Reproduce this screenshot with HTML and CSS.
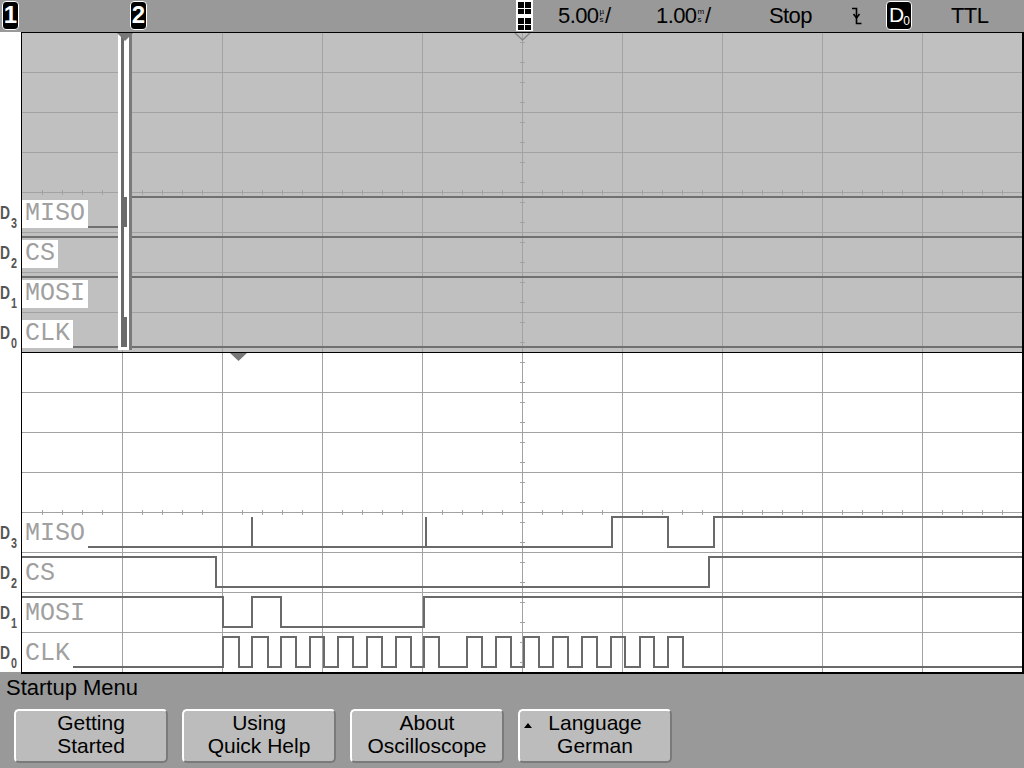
FILE: index.html
```html
<!DOCTYPE html>
<html>
<head>
<meta charset="utf-8">
<link rel="stylesheet" href="styles.css">
</head>
<body>
<div class="scope">
  <header class="status">
    <div class="badge badge-1">1</div>
    <div class="badge badge-2">2</div>
    <svg class="gridicon" width="17" height="31" viewBox="0 0 17 31">
      <rect x="0" y="0" width="17" height="31" fill="#fff"/>
      <rect x="2" y="2" width="6" height="6" fill="#000"/>
      <rect x="9" y="2" width="6" height="6" fill="#000"/>
      <rect x="2" y="9" width="6" height="5" fill="#000"/>
      <rect x="9" y="9" width="6" height="5" fill="#000"/>
      <rect x="2" y="18" width="6" height="6" fill="#000"/>
      <rect x="9" y="18" width="6" height="6" fill="#000"/>
      <rect x="2" y="25" width="6" height="5" fill="#000"/>
      <rect x="9" y="25" width="6" height="5" fill="#000"/>
    </svg>
    <div class="scale scale-time"><span>5.00</span><span class="unit"><i>µ</i><i>s</i></span><span>/</span></div>
    <div class="scale scale-main"><span>1.00</span><span class="unit"><i>m</i><i>s</i></span><span>/</span></div>
    <div class="runstate">Stop</div>
    <svg class="trig" width="11" height="20" viewBox="0 0 11 20">
      <path d="M1 2.5 H5.5 V17.5 H10.5" fill="none" stroke="#000" stroke-width="1.6"/>
      <path d="M2.5 8 L5.5 12 L8.5 8" fill="none" stroke="#000" stroke-width="1.6"/>
    </svg>
    <div class="badge badge-d0">D<sub>0</sub></div>
    <div class="trigmode">TTL</div>
  </header>

  <svg class="screen" width="1024" height="642" viewBox="0 32 1024 642" font-family="Liberation Mono, monospace">
    <!-- backgrounds -->
    <rect x="0" y="32" width="21" height="640" fill="#fff"/>
    <rect x="22" y="33" width="1000" height="319" fill="#c0c0c0"/>
    <rect x="22" y="353" width="1000" height="319" fill="#fff"/>

    <!-- grid -->
    <g stroke="#a2a2a2" stroke-width="1" shape-rendering="crispEdges">
      <path d="M122.5 33V672 M222.5 33V672 M322.5 33V672 M422.5 33V672 M522.5 33V672 M622.5 33V672 M722.5 33V672 M822.5 33V672 M922.5 33V672"/>
      <path d="M22 72.5H1022 M22 112.5H1022 M22 152.5H1022 M22 192.5H1022 M22 232.5H1022 M22 272.5H1022 M22 312.5H1022"/>
      <path d="M22 392.5H1022 M22 432.5H1022 M22 472.5H1022 M22 512.5H1022 M22 552.5H1022 M22 592.5H1022 M22 632.5H1022"/>
      <path id="hticks" d="M42.5 190V195 M62.5 190V195 M82.5 190V195 M102.5 190V195 M142.5 190V195 M162.5 190V195 M182.5 190V195 M202.5 190V195 M242.5 190V195 M262.5 190V195 M282.5 190V195 M302.5 190V195 M342.5 190V195 M362.5 190V195 M382.5 190V195 M402.5 190V195 M442.5 190V195 M462.5 190V195 M482.5 190V195 M502.5 190V195 M542.5 190V195 M562.5 190V195 M582.5 190V195 M602.5 190V195 M642.5 190V195 M662.5 190V195 M682.5 190V195 M702.5 190V195 M742.5 190V195 M762.5 190V195 M782.5 190V195 M802.5 190V195 M842.5 190V195 M862.5 190V195 M882.5 190V195 M902.5 190V195 M942.5 190V195 M962.5 190V195 M982.5 190V195 M1002.5 190V195"/>
      <use href="#hticks" y="320"/>
      <path d="M520 42.5H525 M520 62.5H525 M520 82.5H525 M520 102.5H525 M520 122.5H525 M520 142.5H525 M520 162.5H525 M520 182.5H525 M520 202.5H525 M520 222.5H525 M520 242.5H525 M520 262.5H525 M520 282.5H525 M520 302.5H525 M520 322.5H525 M520 342.5H525 M520 362.5H525 M520 382.5H525 M520 402.5H525 M520 422.5H525 M520 442.5H525 M520 462.5H525 M520 482.5H525 M520 502.5H525 M520 522.5H525 M520 542.5H525 M520 562.5H525 M520 582.5H525 M520 602.5H525 M520 622.5H525 M520 642.5H525 M520 662.5H525"/>
    </g>

    <!-- upper (main) waveforms -->
    <g fill="none" stroke="#707070" stroke-width="2" shape-rendering="crispEdges">
      <path d="M22 227H121"/>
      <path d="M131 197H1022"/>
      <path d="M22 237H1022"/>
      <path d="M22 277H1022"/>
      <path d="M22 347H1022"/>
    </g>

    <!-- lower (zoomed) waveforms -->
    <g fill="none" stroke="#6a6a6a" stroke-width="2" shape-rendering="crispEdges">
      <path d="M22 547H252V517V547H426V517V547H612V517H668V547H714V517H1022"/>
      <path d="M22 557H216V587H709V557H1022"/>
      <path d="M22 597H223V627H252V597H281V627H424V597H1022"/>
      <path d="M22 667H223V637H239V667H252V637H268V667H281V637H296V667H310V637H324V667H338V637H353V667H367V637H382V667H396V637H411V667H424V637H439V667H467V637H482V667H496V637H511V667H524V637H539V667H553V637H568V667H582V637H597V667H611V637H625V667H640V637H654V667H668V637H683V667H1022"/>
    </g>

    <!-- zoom window marker in main view -->
    <g shape-rendering="crispEdges">
      <rect x="118" y="33" width="3" height="317" fill="#fff"/>
      <rect x="121" y="33" width="3" height="314" fill="#6a6a6a"/>
      <rect x="124" y="33" width="5" height="314" fill="#fff"/>
      <rect x="129" y="33" width="3" height="317" fill="#7a7a7a"/>
      <rect x="118" y="347" width="11" height="3" fill="#fff"/>
      <rect x="124" y="197" width="3" height="30" fill="#6a6a6a"/>
      <rect x="124" y="317" width="3" height="30" fill="#6a6a6a"/>
    </g>

    <!-- channel label boxes & names -->
    <g fill="#fff">
      <rect x="22" y="200" width="66" height="28"/>
      <rect x="22" y="240" width="36" height="28"/>
      <rect x="22" y="280" width="66" height="28"/>
      <rect x="22" y="320" width="51" height="28"/>
      <rect x="22" y="520" width="66" height="28"/>
      <rect x="22" y="560" width="36" height="28"/>
      <rect x="22" y="600" width="66" height="28"/>
      <rect x="22" y="640" width="51" height="28"/>
    </g>
    <g fill="#a0a0a0" font-size="25">
      <text x="25" y="219.5">MISO</text>
      <text x="25" y="259.5">CS</text>
      <text x="25" y="299.5">MOSI</text>
      <text x="25" y="339.5">CLK</text>
      <text x="25" y="539.5">MISO</text>
      <text x="25" y="579.5">CS</text>
      <text x="25" y="619.5">MOSI</text>
      <text x="25" y="659.5">CLK</text>
    </g>

    <!-- D labels -->
    <g fill="#555" font-family="Liberation Sans, Arial, sans-serif" font-weight="bold">
      <g font-size="18">
        <text x="0" y="219" textLength="10" lengthAdjust="spacingAndGlyphs">D</text>
        <text x="0" y="259" textLength="10" lengthAdjust="spacingAndGlyphs">D</text>
        <text x="0" y="299" textLength="10" lengthAdjust="spacingAndGlyphs">D</text>
        <text x="0" y="339" textLength="10" lengthAdjust="spacingAndGlyphs">D</text>
        <text x="0" y="539" textLength="10" lengthAdjust="spacingAndGlyphs">D</text>
        <text x="0" y="579" textLength="10" lengthAdjust="spacingAndGlyphs">D</text>
        <text x="0" y="619" textLength="10" lengthAdjust="spacingAndGlyphs">D</text>
        <text x="0" y="659" textLength="10" lengthAdjust="spacingAndGlyphs">D</text>
      </g>
      <g font-size="14">
        <text x="11" y="228" textLength="6" lengthAdjust="spacingAndGlyphs">3</text>
        <text x="11" y="268" textLength="6" lengthAdjust="spacingAndGlyphs">2</text>
        <text x="11" y="308" textLength="6" lengthAdjust="spacingAndGlyphs">1</text>
        <text x="11" y="348" textLength="6" lengthAdjust="spacingAndGlyphs">0</text>
        <text x="11" y="548" textLength="6" lengthAdjust="spacingAndGlyphs">3</text>
        <text x="11" y="588" textLength="6" lengthAdjust="spacingAndGlyphs">2</text>
        <text x="11" y="628" textLength="6" lengthAdjust="spacingAndGlyphs">1</text>
        <text x="11" y="668" textLength="6" lengthAdjust="spacingAndGlyphs">0</text>
      </g>
    </g>

    <!-- markers -->
    <polygon points="117,33 133,33 125,41" fill="#777"/>
    <polyline points="515,33 522.5,40 530,33" fill="none" stroke="#888" stroke-width="1.5"/>
    <polygon points="230,353 247,353 238.5,361" fill="#777"/>

    <!-- frame lines -->
    <g fill="#000" shape-rendering="crispEdges">
      <rect x="21" y="32" width="1003" height="1"/>
      <rect x="21" y="32" width="1" height="642"/>
      <rect x="21" y="352" width="1003" height="1"/>
      <rect x="21" y="672" width="1003" height="2"/>
      <rect x="1022" y="32" width="2" height="642"/>
    </g>
  </svg>

  <footer class="menu">
    <div class="menu-title">Startup Menu</div>
    <div class="softkeys">
      <div class="softkey">Getting<br>Started</div>
      <div class="softkey">Using<br>Quick Help</div>
      <div class="softkey">About<br>Oscilloscope</div>
      <div class="softkey softkey-cycle">Language<br>German</div>
    </div>
  </footer>
</div>
</body>
</html>
```
FILE: styles.css
```css
html, body {
  margin: 0;
  padding: 0;
}
body {
  background: #999999;
  font-family: "Liberation Sans", Arial, sans-serif;
  color: #000;
}
.scope {
  width: 1024px;
  height: 768px;
  display: flex;
  flex-direction: column;
  overflow: hidden;
}

/* ---------- status bar ---------- */
.status {
  height: 32px;
  flex-shrink: 0;
  display: flex;
  align-items: flex-start;
  font-size: 22px;
  letter-spacing: -0.6px;
  line-height: 32px;
}
.status > * {
  flex-shrink: 0;
}
.badge {
  box-sizing: border-box;
  margin-top: 1px;
  height: 29px;
  width: 17px;
  background: #000;
  border: 1.5px solid #fff;
  border-radius: 4px;
  color: #fff;
  font-weight: bold;
  font-size: 24px;
  line-height: 26px;
  text-align: center;
  letter-spacing: 0;
}
.badge-1 {
  margin-left: 2px;
}
.badge-2 {
  margin-left: 111px;
}
.gridicon {
  display: block;
  margin-left: 369px;
}
.scale {
  display: flex;
  align-items: flex-start;
}
.scale-time {
  margin-left: 25px;
  width: 80px;
}
.scale-main {
  margin-left: 18px;
  width: 95px;
}
.unit {
  display: flex;
  flex-direction: column;
  font-size: 8px;
  line-height: 8px;
  padding-top: 8px;
  margin: 0 1px 0 1px;
  letter-spacing: 0;
}
.unit i {
  font-style: normal;
}
.runstate {
  margin-left: 18px;
  width: 64px;
}
.trig {
  display: block;
  margin-top: 6px;
  margin-left: 18px;
}
.badge-d0 {
  margin-left: 24px;
  width: 26px;
  font-size: 21px;
  font-weight: normal;
  line-height: 26px;
  letter-spacing: -1px;
}
.badge-d0 sub {
  font-size: 12px;
  vertical-align: -3px;
  line-height: 0;
}
.trigmode {
  margin-left: 39px;
}

/* ---------- screen ---------- */
.screen {
  display: block;
  flex-shrink: 0;
}

/* ---------- softkey menu ---------- */
.menu {
  flex: 1;
  display: flex;
  flex-direction: column;
  padding-top: 1px;
}
.menu-title {
  font-size: 22px;
  line-height: 26px;
  padding-left: 6px;
}
.softkeys {
  display: flex;
  gap: 14px;
  padding-left: 14px;
  margin-top: 8px;
}
.softkey {
  position: relative;
  box-sizing: border-box;
  width: 154px;
  height: 54px;
  background: #bcbcbc;
  border: 2px solid;
  border-color: #ffffff #7a7a7a #7a7a7a #ffffff;
  border-radius: 5px;
  font-size: 21px;
  line-height: 23px;
  text-align: center;
  padding-top: 0;
}
.softkey-cycle::before {
  content: "";
  position: absolute;
  left: 4px;
  top: 12px;
  width: 0;
  height: 0;
  border-left: 4px solid transparent;
  border-right: 4px solid transparent;
  border-bottom: 5px solid #000;
}
```
